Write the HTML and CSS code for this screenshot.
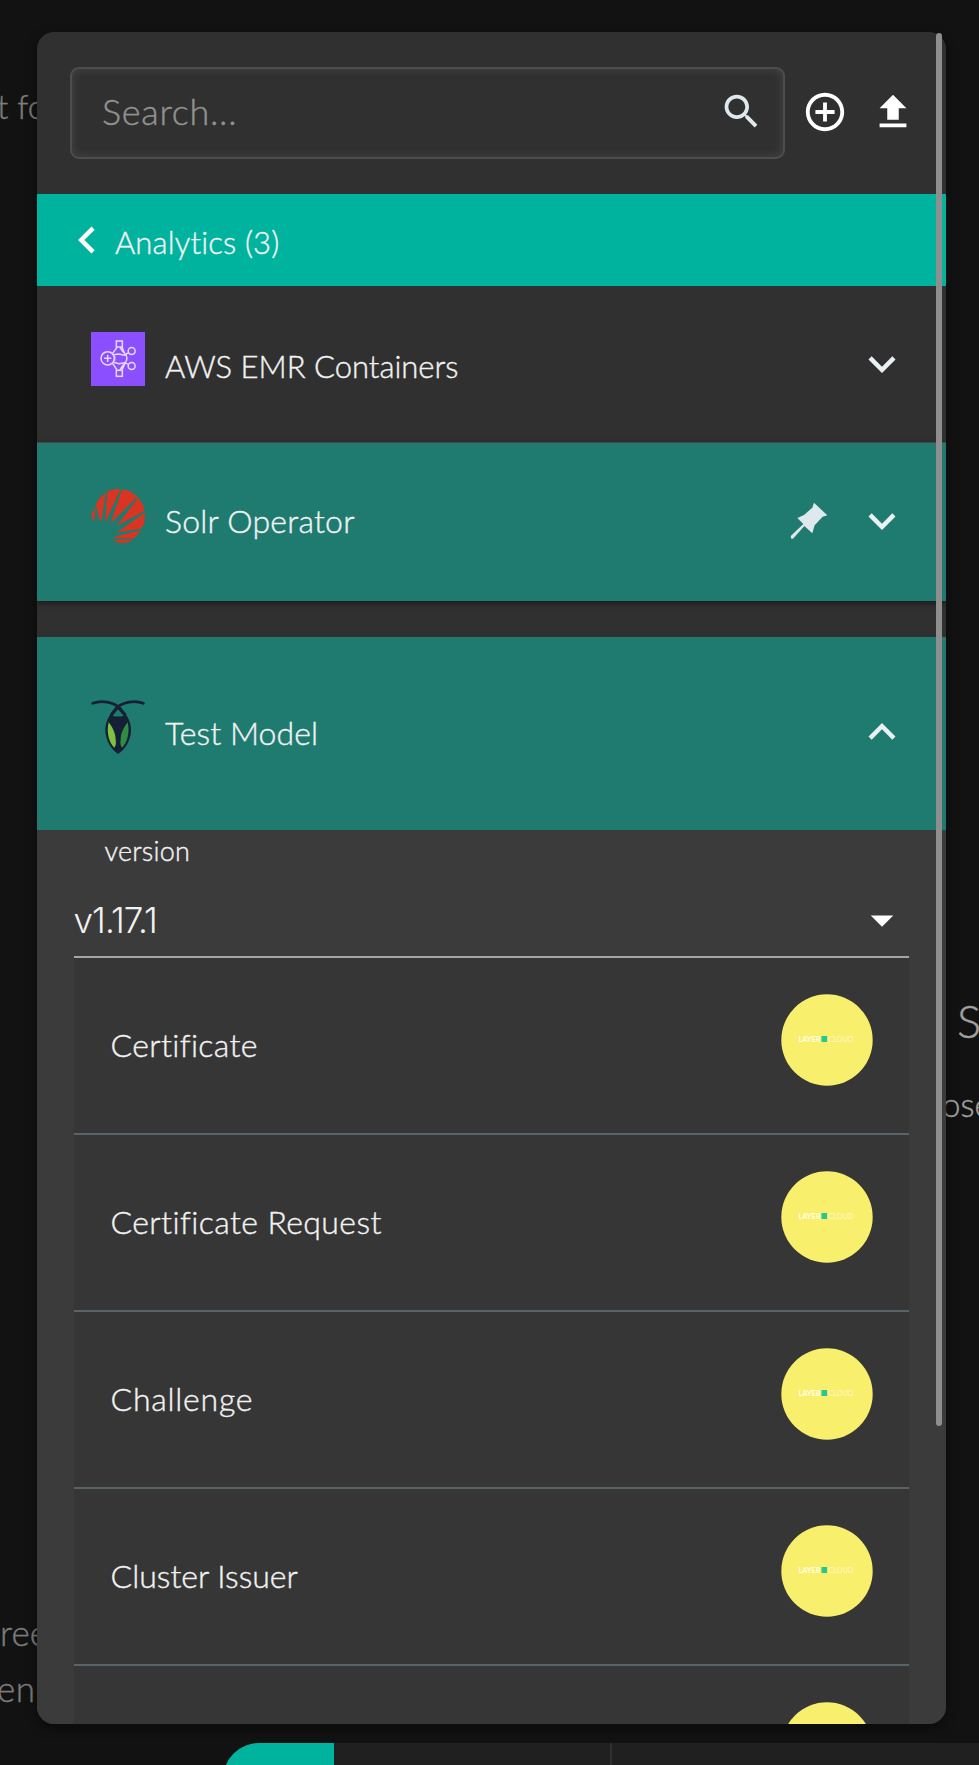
FILE: index.html
```
<!DOCTYPE html>
<html lang="en">
<head>
<meta charset="utf-8">
<title>Components</title>
<link rel="stylesheet" href="styles.css">
</head>
<body>
<svg class="defs" aria-hidden="true">
  <symbol id="chevron-down" viewBox="0 0 24 24"><path d="M16.59 8.59 12 13.17 7.41 8.59 6 10l6 6 6-6z"/></symbol>
  <symbol id="badge" viewBox="0 0 92 92">
    <circle cx="46" cy="46" r="45.7" fill="#f8ef6c"/>
    <text x="17.5" y="48" class="logo-bold" textLength="22" lengthAdjust="spacingAndGlyphs">LAYER</text>
    <rect x="40.5" y="42" width="5.6" height="6" fill="#27c795"/>
    <text x="47.5" y="48" class="logo-thin" textLength="25" lengthAdjust="spacingAndGlyphs">CLOUD</text>
  </symbol>
</svg>
<div class="page">
  <span class="behind b1">t fo</span>
  <span class="behind b2">S</span>
  <span class="behind b3">ose</span>
  <span class="behind b4">ree</span>
  <span class="behind b5">en</span>
  <div class="dock"><div class="dock-active"></div><div class="dock-item"></div><div class="dock-rest"></div></div>

  <main class="panel">
    <header class="top">
      <div class="search">
        <span class="placeholder">Search...</span>
        <svg class="i-search" viewBox="0 0 24 24"><path d="M15.5 14h-.79l-.28-.27C15.41 12.59 16 11.11 16 9.5 16 5.91 13.09 3 9.5 3S3 5.91 3 9.5 5.91 16 9.5 16c1.61 0 3.09-.59 4.23-1.57l.27.28v.79l5 4.99L20.49 19zm-6 0C7.01 14 5 11.99 5 9.5S7.01 5 9.5 5 14 7.01 14 9.5 11.99 14 9.5 14"/></svg>
      </div>
      <svg class="i-add" viewBox="0 0 24 24"><path d="M13 7h-2v4H7v2h4v4h2v-4h4v-2h-4zm-1-5C6.48 2 2 6.48 2 12s4.48 10 10 10 10-4.48 10-10S17.52 2 12 2m0 18c-4.41 0-8-3.59-8-8s3.59-8 8-8 8 3.59 8 8-3.59 8-8 8"/></svg>
      <svg class="i-upload" viewBox="0 0 24 24"><path d="M9 16h6v-6h4l-7-7-7 7h4zm-4 2h14v2H5z"/></svg>
    </header>

    <div class="category">
      <svg class="i-back" viewBox="0 0 24 24"><path d="M15.41 7.41 14 6l-6 6 6 6 1.41-1.41L10.83 12z"/></svg>
      <span class="t-analytics">Analytics (3)</span>
    </div>

    <div class="model">
      <svg class="logo" viewBox="33 36 162 162">
        <rect x="33" y="36" width="162" height="162" fill="#8c4fff"/>
        <g fill="none" stroke="#e6d9ff" stroke-width="4.5">
          <circle cx="83" cy="115" r="20"/><path d="M83 104v22M72 115h22"/>
          <rect x="109" y="63" width="18" height="18"/><rect x="109" y="151" width="18" height="18"/>
          <circle cx="155" cy="93" r="10.5"/><circle cx="155" cy="138" r="10.5"/>
          <path d="M111 82 98 100M98 130l13 20M126 82l9 20M135 130l-9 20M101 104l15-2 18 4M101 127l16 4 18-3M104 109v13M146 98l-14 8M146 133l-14-6M134 101c9 7 9 19 0 29M120 82c5 9 9 15 16 19M120 150c4-9 8-15 16-19"/>
        </g>
      </svg>
      <span class="name t-aws">AWS EMR Containers</span>
      <svg class="i-chev"><use href="#chevron-down"/></svg>
    </div>

    <div class="model active">
      <svg class="logo" viewBox="33 27 162 162">
        <path fill="#da3423" d="M43 123C31 111 32 99 42 91C47 72 55 55 72 43C87 30 100 27 115 27C160 27 195 62 195 108C195 132 182 155 168 168C162 178 148 189 127 189C115 189 108 186 102 180L104 145L92 123Z"/>
        <g fill="#1f7b6f">
          <path d="M46 78 49 78 61 128 43 128ZM78 34h4L75 128H63ZM123 24h4L91 132 76 128ZM169 53l3 3L105 145 90 132ZM196 92v5L105 161 97 145ZM193 144v4L101 171 101 159ZM175 174v3L100 180 100 175Z"/>
        </g>
      </svg>
      <span class="name t-solr">Solr Operator</span>
      <svg class="i-pin" viewBox="268 308 114 112"><path d="M340 310 380 348 366 352 342 378 335 402 311 380 277 418Q268 420 271 409L308 374 290 356 310 347 335 325Z"/></svg>
      <svg class="i-chev"><use href="#chevron-down"/></svg>
    </div>

    <div class="model active open">
      <svg class="logo" viewBox="33 30 162 162">
        <path fill="#151f35" d="M114 52C95 66 76 87 76 120C76 150 93 178 114 192C136 178 153 150 153 120C153 87 134 66 114 52Z"/>
        <path fill="#1f7b6f" d="M114 58 131 77Q114 82 98 77Z"/>
        <path fill="none" stroke="#151f35" stroke-width="8" stroke-linecap="round" d="M38 40C65 30 100 36 119 54L135 74M190 40C164 30 129 36 109 54L94 74"/>
        <path fill="#7fc241" d="M86 97C78 130 89 161 103 173C109 166 108 155 107 149C107 127 95 109 86 97Z"/>
        <path fill="#318b43" d="M143 97C151 130 140 161 126 173C120 166 121 155 122 149C122 127 134 109 143 97Z"/>
      </svg>
      <span class="name t-test">Test Model</span>
      <svg class="i-chev up"><use href="#chevron-down"/></svg>
    </div>

    <section class="details">
      <div class="label">version</div>
      <div class="select"><span class="t-ver">v1.17.1</span><svg class="i-drop" viewBox="0 0 24 24"><path d="m7 10 5 5 5-5z"/></svg></div>
      <div class="item"><span class="t-c1">Certificate</span><svg class="badge"><use href="#badge"/></svg></div>
      <div class="item"><span class="t-c2">Certificate Request</span><svg class="badge"><use href="#badge"/></svg></div>
      <div class="item"><span class="t-c3">Challenge</span><svg class="badge"><use href="#badge"/></svg></div>
      <div class="item"><span class="t-c4">Cluster Issuer</span><svg class="badge"><use href="#badge"/></svg></div>
      <div class="item"><span></span><svg class="badge"><use href="#badge"/></svg></div>
    </section>
  </main>
  <div class="scrollbar"></div>
</div>
</body>
</html>
```
FILE: styles.css
```
* { box-sizing: border-box; }
body { margin: 0; background: #121212; font-family: Lato, "Open Sans", sans-serif; font-weight: 300; color: #f2f2f2; -webkit-text-stroke: .4px currentColor; }
svg { display: block; flex: none; fill: #fff; }
.defs { position: absolute; width: 0; height: 0; }
.page { position: relative; width: 979px; height: 1765px; overflow: hidden; padding: 31.5px 34px 0 37px; }

.panel { position: relative; width: 908.5px; height: 1692px; border-radius: 17px; overflow: hidden; background: #303030; box-shadow: 0 4px 12px rgba(0,0,0,.45); }
.top { display: flex; align-items: center; height: 162px; padding: 0 0 0 33px; }
.search { display: flex; align-items: center; justify-content: space-between; width: 714.5px; height: 92px; padding: 0 19px 3px 30px; border: 2px solid #4d4d4d; border-radius: 9px; box-shadow: inset 0 0 10px #474747; }
.placeholder { font-size: 36px; line-height: 44px; letter-spacing: .7px; color: #929292; }
.i-search { width: 45px; height: 45px; fill: #dfe8ec; }
.i-add { width: 46px; height: 46px; margin: 0 0 2px 17.5px; }
.i-upload { width: 46px; height: 46px; margin: 0 0 2px 22px; }

.category { display: flex; align-items: center; height: 92.5px; padding-left: 23px; background: #00b39f; font-size: 31px; letter-spacing: .15px; }
.i-back { width: 54px; height: 54px; }
.t-analytics { padding: 4px 0 0 1px; }

.model { display: flex; align-items: center; height: 156.5px; padding: 0 37px 0 54px; border-bottom: 1px solid #505050; font-size: 32px; }
.logo { width: 54px; height: 54px; margin: 0 20px 10px 0; }
.name { flex: 1; padding-top: 4px; }
.t-aws { font-size: 31px; }
.t-solr { letter-spacing: .22px; }
.t-test { letter-spacing: .1px; }
.i-chev { width: 54px; height: 54px; fill: #e9f1f2; }
.up { transform: rotate(180deg); }
.i-pin { width: 38px; height: 37.3px; margin-right: 27px; fill: #dfe8ec; }
.active { height: 158px; padding-bottom: 2px; border: 0; background: #1f7b6f; box-shadow: 0 2px 6px rgba(0,0,0,.5); }
.active .name { padding: 0; }
.open { height: 192.5px; margin-top: 36.5px; box-shadow: none; }

.details { height: 894px; padding: 0 37px 0 36.5px; background: #3b3b3b; }
.label { height: 48px; padding: 4px 0 0 31px; font-size: 27px; line-height: 34px; letter-spacing: .2px; }
.select { display: flex; align-items: center; justify-content: space-between; height: 80px; padding-top: 7px; border-bottom: 2px solid #a4a7a7; font-size: 35px; }
.t-ver { padding-bottom: 1px; font-family: Inter, sans-serif; letter-spacing: -.9px; -webkit-text-stroke: 0; }
.i-drop { width: 54px; height: 54px; }
.item { display: flex; justify-content: space-between; height: 177.1px; padding: 36px 36px 0 37px; border-bottom: 2px solid #596469; background: #363636; font-size: 32px; line-height: 38px; }
.item span { padding-top: 32px; }
.t-c1 { letter-spacing: .35px; }
.t-c2 { letter-spacing: .4px; }
.t-c3 { letter-spacing: .75px; }
.badge { width: 92px; height: 92px; -webkit-text-stroke: 0; }
.logo-bold, .logo-thin { font-family: Lato, sans-serif; font-size: 7px; fill: #fffde5; }
.logo-bold { font-weight: 900; }
.logo-thin { font-weight: 400; opacity: .75; }

.scrollbar { position: absolute; left: 936px; top: 33px; width: 6px; height: 1393px; border-radius: 3px; background: #8e8e8e; }

.behind { position: absolute; white-space: nowrap; color: #7c7c7c; font-size: 33px; line-height: 40px; }
.b1 { left: -3px; top: 86px; }
.b2 { left: 957px; top: 1001px; font-size: 45px; color: #a0a0a0; }
.b3 { left: 942px; top: 1084px; color: #a0a0a0; }
.b4 { left: 0; top: 1612px; font-size: 35px; }
.b5 { left: -3px; top: 1668px; font-size: 35px; letter-spacing: .5px; }
.dock { position: absolute; left: 223px; top: 1743px; display: flex; width: 756px; height: 74px; }
.dock-active { width: 111px; background: #00b39f; border-radius: 36px 0 0 36px; }
.dock-item { width: 277.5px; background: #202020; border-right: 2px solid #303030; }
.dock-rest { flex: 1; background: #202020; }
```
